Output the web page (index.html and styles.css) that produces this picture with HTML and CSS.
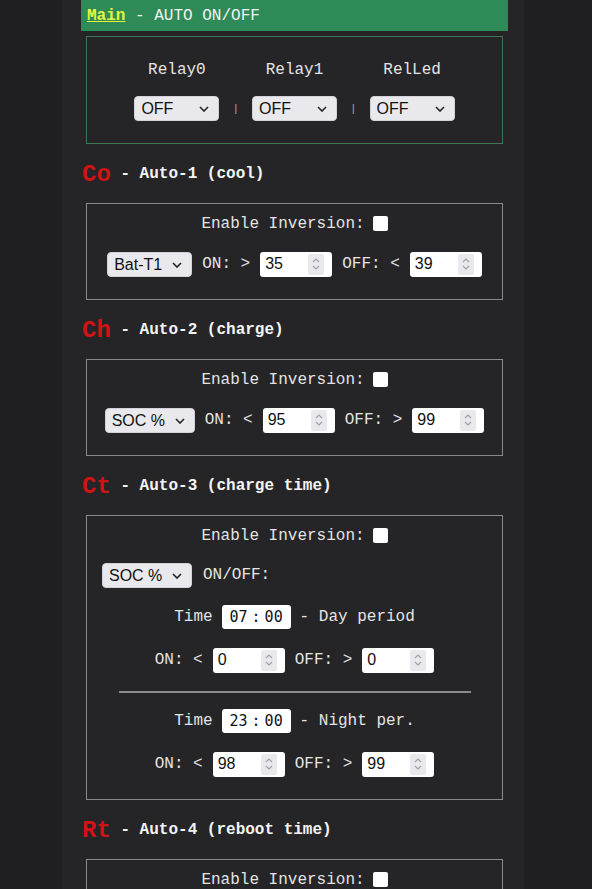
FILE: index.html
```html
<!DOCTYPE html>
<html lang="en">
<head>
    <meta charset="UTF-8">
    <meta name="viewport" content="width=device-width, initial-scale=1.0">
    <title>AUTO ON/OFF</title>
    <link rel="stylesheet" href="styles.css">
</head>
<body>
    <div class="page">
        <div class="content">
            <div class="topbar"><a href="#" class="main-link">Main</a>&nbsp;- AUTO ON/OFF</div>

            <div class="box main-box">
                <div class="relays">
                    <div class="relay">
                        <span>Relay0</span>
                        <div class="sel sel-fixed">
                            <select><option>OFF</option><option>ON</option><option>AUTO</option></select>
                            <svg class="chev" width="10" height="6" viewBox="0 0 10 6"><path d="M1 1l4 4 4-4" fill="none" stroke="#222" stroke-width="1.6"/></svg>
                        </div>
                    </div>
                    <span class="sep">|</span>
                    <div class="relay">
                        <span>Relay1</span>
                        <div class="sel sel-fixed">
                            <select><option>OFF</option><option>ON</option><option>AUTO</option></select>
                            <svg class="chev" width="10" height="6" viewBox="0 0 10 6"><path d="M1 1l4 4 4-4" fill="none" stroke="#222" stroke-width="1.6"/></svg>
                        </div>
                    </div>
                    <span class="sep">|</span>
                    <div class="relay">
                        <span>RelLed</span>
                        <div class="sel sel-fixed">
                            <select><option>OFF</option><option>ON</option><option>AUTO</option></select>
                            <svg class="chev" width="10" height="6" viewBox="0 0 10 6"><path d="M1 1l4 4 4-4" fill="none" stroke="#222" stroke-width="1.6"/></svg>
                        </div>
                    </div>
                </div>
            </div>

            <!-- Auto-1 -->
            <div class="heading"><span class="code">Co</span>&nbsp;- Auto-1 (cool)</div>
            <div class="box">
                <label class="inv">Enable Inversion:<input type="checkbox"></label>
                <div class="row">
                    <div class="sel">
                        <select><option>Bat-T1</option></select>
                        <svg class="chev" width="10" height="6" viewBox="0 0 10 6"><path d="M1 1l4 4 4-4" fill="none" stroke="#222" stroke-width="1.6"/></svg>
                    </div>
                    <span>ON: &gt;</span>
                    <div class="num"><input type="text" value="35"><span class="spin"><svg width="8" height="14" viewBox="0 0 8 14"><path d="M1 5l3-3 3 3M1 9l3 3 3-3" fill="none" stroke="#a0a0a8" stroke-width="1.2"/></svg></span></div>
                    <span>OFF: &lt;</span>
                    <div class="num"><input type="text" value="39"><span class="spin"><svg width="8" height="14" viewBox="0 0 8 14"><path d="M1 5l3-3 3 3M1 9l3 3 3-3" fill="none" stroke="#a0a0a8" stroke-width="1.2"/></svg></span></div>
                </div>
            </div>

            <!-- Auto-2 -->
            <div class="heading"><span class="code">Ch</span>&nbsp;- Auto-2 (charge)</div>
            <div class="box">
                <label class="inv">Enable Inversion:<input type="checkbox"></label>
                <div class="row">
                    <div class="sel">
                        <select><option>SOC %</option></select>
                        <svg class="chev" width="10" height="6" viewBox="0 0 10 6"><path d="M1 1l4 4 4-4" fill="none" stroke="#222" stroke-width="1.6"/></svg>
                    </div>
                    <span>ON: &lt;</span>
                    <div class="num"><input type="text" value="95"><span class="spin"><svg width="8" height="14" viewBox="0 0 8 14"><path d="M1 5l3-3 3 3M1 9l3 3 3-3" fill="none" stroke="#a0a0a8" stroke-width="1.2"/></svg></span></div>
                    <span>OFF: &gt;</span>
                    <div class="num"><input type="text" value="99"><span class="spin"><svg width="8" height="14" viewBox="0 0 8 14"><path d="M1 5l3-3 3 3M1 9l3 3 3-3" fill="none" stroke="#a0a0a8" stroke-width="1.2"/></svg></span></div>
                </div>
            </div>

            <!-- Auto-3 -->
            <div class="heading"><span class="code">Ct</span>&nbsp;- Auto-3 (charge time)</div>
            <div class="box">
                <label class="inv">Enable Inversion:<input type="checkbox"></label>
                <div class="row row-left">
                    <div class="sel">
                        <select><option>SOC %</option></select>
                        <svg class="chev" width="10" height="6" viewBox="0 0 10 6"><path d="M1 1l4 4 4-4" fill="none" stroke="#222" stroke-width="1.6"/></svg>
                    </div>
                    <span>ON/OFF:</span>
                </div>
                <div class="row row-time">
                    <span>Time</span>
                    <div class="time"><span>07</span><span>:</span><span>00</span></div>
                    <span>- Day period</span>
                </div>
                <div class="row">
                    <span>ON: &lt;</span>
                    <div class="num"><input type="text" value="0"><span class="spin"><svg width="8" height="14" viewBox="0 0 8 14"><path d="M1 5l3-3 3 3M1 9l3 3 3-3" fill="none" stroke="#a0a0a8" stroke-width="1.2"/></svg></span></div>
                    <span>OFF: &gt;</span>
                    <div class="num"><input type="text" value="0"><span class="spin"><svg width="8" height="14" viewBox="0 0 8 14"><path d="M1 5l3-3 3 3M1 9l3 3 3-3" fill="none" stroke="#a0a0a8" stroke-width="1.2"/></svg></span></div>
                </div>
                <div class="divider"></div>
                <div class="row row-time">
                    <span>Time</span>
                    <div class="time"><span>23</span><span>:</span><span>00</span></div>
                    <span>- Night per.</span>
                </div>
                <div class="row">
                    <span>ON: &lt;</span>
                    <div class="num"><input type="text" value="98"><span class="spin"><svg width="8" height="14" viewBox="0 0 8 14"><path d="M1 5l3-3 3 3M1 9l3 3 3-3" fill="none" stroke="#a0a0a8" stroke-width="1.2"/></svg></span></div>
                    <span>OFF: &gt;</span>
                    <div class="num"><input type="text" value="99"><span class="spin"><svg width="8" height="14" viewBox="0 0 8 14"><path d="M1 5l3-3 3 3M1 9l3 3 3-3" fill="none" stroke="#a0a0a8" stroke-width="1.2"/></svg></span></div>
                </div>
            </div>

            <!-- Auto-4 -->
            <div class="heading"><span class="code">Rt</span>&nbsp;- Auto-4 (reboot time)</div>
            <div class="box">
                <label class="inv">Enable Inversion:<input type="checkbox"></label>
                <div class="row row-time">
                    <span>Time</span>
                    <div class="time"><span>04</span><span>:</span><span>00</span></div>
                </div>
            </div>
        </div>
    </div>
</body>
</html>
```

FILE: styles.css
```css
body {
    margin: 0;
    background-color: #1f1f22;
    color: #e4e4e4;
    font-family: "Liberation Mono", "Courier New", monospace;
    font-size: 16px;
}
.page {
    width: 462px;
    margin-left: 62px;
    min-height: 100vh;
    background: #252528;
}
.content {
    width: 427px;
    padding-left: 19px;
    padding-bottom: 40px;
}
.topbar {
    height: 31px;
    display: flex;
    align-items: center;
    padding-left: 6px;
    background: #2e8b57;
    color: #f2f2f2;
}
.main-link {
    color: #e6f53c;
    font-weight: bold;
    text-decoration: underline;
}
.box {
    margin: 0 5px;
    padding: 11px 0 22px;
    border: 1px solid #8a8a8c;
    display: flex;
    flex-direction: column;
    align-items: center;
    gap: 18px;
}
.main-box {
    margin-top: 5px;
    padding: 24px 0 22px;
    border-color: #3e7653;
}
.relays {
    display: flex;
    align-items: flex-end;
    gap: 13px;
}
.relay {
    display: flex;
    flex-direction: column;
    align-items: center;
    gap: 17px;
    line-height: 18px;
}
.sep {
    font-size: 11px;
    line-height: 11px;
    color: #aaa;
    margin-bottom: 6px;
}
.heading {
    height: 28px;
    margin: 16px 0 15px 1px;
    display: flex;
    align-items: center;
    font-weight: bold;
    color: #f4f4f4;
}
.code {
    color: #d01414;
    font-size: 24px;
}
.inv {
    height: 18px;
    display: flex;
    align-items: center;
}
.inv input {
    appearance: none;
    width: 15px;
    height: 15px;
    margin: 0 0 2px 8px;
    background: #fff;
    border-radius: 2px;
}
.row {
    display: flex;
    align-items: center;
    gap: 10px;
    height: 26px;
}
.row-left {
    align-self: flex-start;
    height: 24px;
    margin-left: 15px;
    gap: 11px;
}
.row-time {
    height: 24px;
    gap: 9px;
}
.sel {
    position: relative;
    height: 25px;
}
.sel select {
    appearance: none;
    height: 25px;
    padding: 0 28px 0 6px;
    border: 1px solid #d2d2d8;
    border-radius: 4px;
    background: #e9e9ed;
    color: #111;
    font-family: "Liberation Sans", Arial, sans-serif;
    font-size: 16px;
}
.sel-fixed select {
    width: 85px;
}
.chev {
    position: absolute;
    right: 10px;
    top: 10px;
    pointer-events: none;
}
.num {
    width: 72px;
    height: 25px;
    box-sizing: border-box;
    display: flex;
    padding: 2px 8px 2px 0;
    background: #fff;
    border-radius: 3px;
}
.num input {
    flex: 1;
    min-width: 0;
    border: none;
    outline: none;
    padding: 0 0 0 5px;
    background: transparent;
    color: #111;
    font-family: "Liberation Sans", Arial, sans-serif;
    font-size: 16px;
}
.spin {
    width: 16px;
    display: flex;
    align-items: center;
    justify-content: center;
    background: #e9e9ed;
    border-radius: 2px;
}
.time {
    width: 69px;
    height: 24px;
    box-sizing: border-box;
    display: flex;
    align-items: center;
    justify-content: center;
    gap: 4px;
    background: #fff;
    border-radius: 3px;
    color: #111;
    font-family: "DejaVu Sans Mono", monospace;
    font-size: 15px;
}
.divider {
    width: 352px;
    height: 2px;
    margin-bottom: -2px;
    background: #8a8a8c;
}
```
